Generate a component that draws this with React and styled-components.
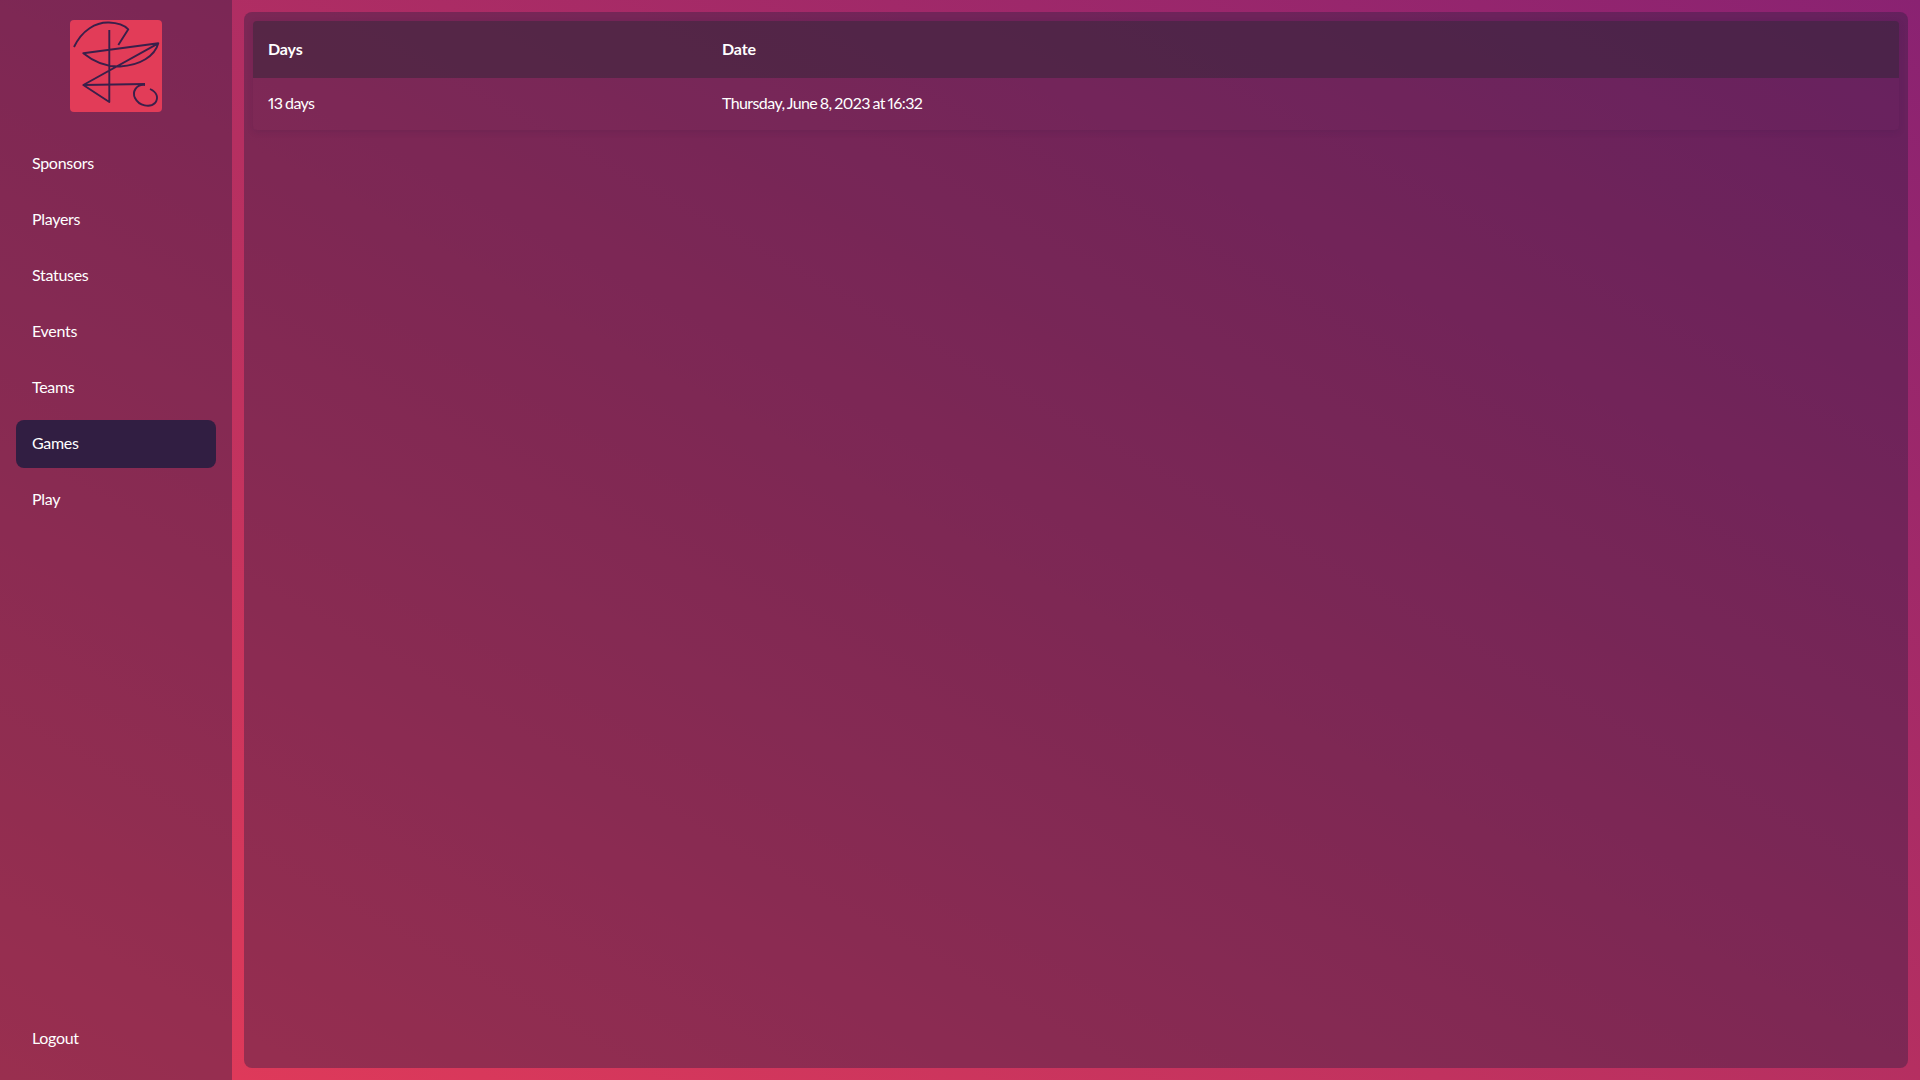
import React from 'react';
import styled, { createGlobalStyle } from 'styled-components';

const GlobalStyle = createGlobalStyle`
  html, body {
    margin: 0;
    padding: 0;
    height: 100%;
  }
  body {
    font-family: Lato, "Noto Sans", sans-serif;
    color: #fff;
  }
`;

const Page = styled.div`
  display: flex;
  height: 100vh;
  overflow: hidden;
  background: linear-gradient(29deg, #e43b59 0%, #b52f61 50%, #8a2272 100%);
`;

const Sidebar = styled.aside`
  display: flex;
  flex-direction: column;
  flex: 0 0 232px;
  box-sizing: border-box;
  padding: 20px 16px 17px;
  background: rgba(49, 30, 66, 0.42);
`;

const LogoBox = styled.div`
  align-self: center;
  width: 92px;
  height: 92px;
  margin-bottom: 28px;
  border-radius: 4px;
  background: #e23c58;
`;

const Nav = styled.nav`
  display: flex;
  flex-direction: column;
  flex: 1;
  gap: 8px;
`;

const NavItem = styled.a`
  display: flex;
  align-items: center;
  height: 48px;
  padding: 0 16px 4px;
  box-sizing: border-box;
  border-radius: 8px;
  font-size: 16px;
  letter-spacing: -0.3px;
  background: ${(p) => (p.$active ? '#311e42' : 'transparent')};
  margin-top: ${(p) => (p.$bottom ? 'auto' : '0')};
`;

const Main = styled.main`
  flex: 1;
  box-sizing: border-box;
  margin: 12px;
  padding: 9px;
  border-radius: 8px;
  background: rgba(49, 30, 66, 0.42);
`;

const Table = styled.div`
  border-radius: 4px;
  overflow: hidden;
  box-shadow: 0 2px 6px rgba(49, 30, 66, 0.15);
`;

const Row = styled.div`
  display: grid;
  grid-template-columns: 454px 1fr;
  align-items: center;
  box-sizing: border-box;
  height: ${(p) => (p.$head ? '57px' : '52px')};
  padding: 0 15px ${(p) => (p.$head ? '3px' : '4px')};
  font-size: 16px;
  font-variant-numeric: proportional-nums;
  letter-spacing: ${(p) => (p.$head ? '-0.15px' : '-0.6px')};
  word-spacing: -0.8px;
  font-weight: ${(p) => (p.$head ? 700 : 400)};
  background: ${(p) => (p.$head ? 'rgba(49, 38, 56, 0.5)' : 'rgba(255, 255, 255, 0.006)')};
`;

const Logo = () => (
  <svg width="92" height="92" viewBox="0 0 92 92" fill="none" stroke="#3a1f4a" strokeWidth="1.9" strokeLinejoin="round">
    <path d="M4 27C12 10 26 2 39 2.500C47 2.800 54 5 58.300 9.300L48.300 25" />
    <path d="M39.300 10V82L13.300 65L88.300 23.300L13.300 33.300C24 42 36 47 50 46.500C70 45.500 85 36 88.300 23.300" />
    <path d="M13.300 65L75 64" />
    <path d="M75 65C66 64 62 72 65 78C69 86 80 88 85 83C89 78 87 72 80 69" />
  </svg>
);

const App = () => (
  <Page>
    <GlobalStyle />
    <Sidebar>
      <LogoBox>
        <Logo />
      </LogoBox>
      <Nav>
        <NavItem>Sponsors</NavItem>
        <NavItem>Players</NavItem>
        <NavItem>Statuses</NavItem>
        <NavItem>Events</NavItem>
        <NavItem>Teams</NavItem>
        <NavItem $active>Games</NavItem>
        <NavItem>Play</NavItem>
        <NavItem $bottom>Logout</NavItem>
      </Nav>
    </Sidebar>
    <Main>
      <Table>
        <Row $head>
          <span>Days</span>
          <span>Date</span>
        </Row>
        <Row>
          <span>13 days</span>
          <span>Thursday, June 8, 2023 at 16:32</span>
        </Row>
      </Table>
    </Main>
  </Page>
);

export default App;
